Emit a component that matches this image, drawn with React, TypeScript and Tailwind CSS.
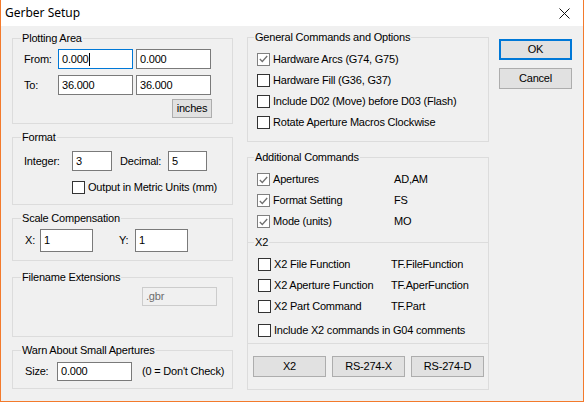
import React from "react";

const font = { fontFamily: '"Liberation Sans", Arial, sans-serif' };

function Group({
  title,
  className,
  children,
}: {
  title: string;
  className?: string;
  children: React.ReactNode;
}) {
  return (
    <fieldset className={`border border-[#dcdcdc] p-0 m-0 min-w-0 ${className ?? ""}`}>
      <legend className="ml-[8px] px-[1px] leading-[14px] text-[11px]">{title}</legend>
      {children}
    </fieldset>
  );
}

function TextBox({
  value,
  w,
  h = "h-[20px]",
  focused,
  disabled,
}: {
  value: string;
  w: string;
  h?: string;
  focused?: boolean;
  disabled?: boolean;
}) {
  return (
    <div
      className={`${w} ${h} flex items-center pl-[3px] border text-[11px] ${
        disabled
          ? "border-[#cccccc] bg-[#f0f0f0] text-[#6d6d6d]"
          : focused
          ? "border-[#0078d7] bg-white"
          : "border-[#7a7a7a] bg-white"
      }`}
    >
      <span>{value}</span>
      {focused && <span className="w-[1px] h-[13px] bg-black" />}
    </div>
  );
}

function Check({ checked, label, className }: { checked?: boolean; label: string; className?: string }) {
  return (
    <div className={`flex items-center gap-[3px] ${className ?? ""}`}>
      <span
        className={`w-[13px] h-[13px] shrink-0 border bg-white flex items-center justify-center ${
          checked ? "border-[#808080]" : "border-[#333333]"
        }`}
      >
        {checked && (
          <svg width="9" height="8" viewBox="0 0 9 8">
            <path d="M0.8 4 L3.3 6.5 L8.2 1" fill="none" stroke="#707070" strokeWidth="1.3" />
          </svg>
        )}
      </span>
      <span className="whitespace-nowrap">{label}</span>
    </div>
  );
}

function Btn({ label, def, className }: { label: string; def?: boolean; className?: string }) {
  return (
    <div
      className={`w-[73px] h-[21px] flex items-center justify-center bg-[#e1e1e1] text-[11px] ${
        def ? "border-2 border-[#0078d7]" : "border border-[#adadad]"
      } ${className ?? ""}`}
    >
      {label}
    </div>
  );
}

export default function App() {
  const general = [
    { label: "Hardware Arcs (G74, G75)", checked: true, h: "h-[22px]" },
    { label: "Hardware Fill (G36, G37)", checked: false, h: "h-[21px]" },
    { label: "Include D02 (Move) before D03 (Flash)", checked: false, h: "h-[21px]" },
    { label: "Rotate Aperture Macros Clockwise", checked: false, h: "h-[21px]" },
  ];
  const additional = [
    { label: "Apertures", code: "AD,AM" },
    { label: "Format Setting", code: "FS" },
    { label: "Mode (units)", code: "MO" },
  ];
  const x2 = [
    { label: "X2 File Function", code: "TF.FileFunction", h: "h-[22px]" },
    { label: "X2 Aperture Function", code: "TF.AperFunction", h: "h-[21px]" },
    { label: "X2 Part Command", code: "TF.Part", h: "h-[21px]" },
  ];

  return (
    <div
      className="w-[584px] h-[402px] bg-[#f0f0f0] border-x border-b border-[#f37a2c] flex flex-col text-black text-[11px] tracking-[-0.2px] overflow-hidden"
      style={font}
    >
      {/* title bar */}
      <div className="h-[26px] bg-white flex items-center justify-between pl-[4px] pr-[13px] shrink-0 tracking-normal">
        <span className="text-[12px]" style={{ fontFamily: '"Noto Sans", "Open Sans", sans-serif' }}>
          Gerber Setup
        </span>
        <svg width="11" height="11" viewBox="0 0 11 11">
          <path d="M0.5 0.5 L10.5 10.5 M10.5 0.5 L0.5 10.5" stroke="#111" strokeWidth="1" />
        </svg>
      </div>

      <div className="flex pl-[11px]">
        {/* left column */}
        <div className="w-[221px] flex flex-col pt-[5px]">
          <Group title="Plotting Area" className="h-[93px]">
            <div className="pl-[11px] pt-[4px] flex flex-col">
              <div className="flex items-center">
                <span className="w-[34px]">From:</span>
                <TextBox value="0.000" w="w-[75px]" focused />
                <div className="ml-[3px]">
                  <TextBox value="0.000" w="w-[75px]" />
                </div>
              </div>
              <div className="flex items-center mt-[6px]">
                <span className="w-[34px]">To:</span>
                <TextBox value="36.000" w="w-[75px]" />
                <div className="ml-[3px]">
                  <TextBox value="36.000" w="w-[75px]" />
                </div>
              </div>
              <div className="mt-[4px] ml-[148px] w-[40px] h-[19px] bg-[#e1e1e1] border border-[#adadad] flex items-center justify-center">
                inches
              </div>
            </div>
          </Group>

          <Group title="Format" className="h-[75px] mt-[6px]">
            <div className="pl-[11px] pt-[7px] flex flex-col">
              <div className="flex items-center">
                <span className="w-[48px]">Integer:</span>
                <TextBox value="3" w="w-[40px]" />
                <span className="w-[48px] ml-[8px]">Decimal:</span>
                <TextBox value="5" w="w-[39px]" />
              </div>
              <Check label="Output in Metric Units (mm)" className="mt-[8px] ml-[48px]" />
            </div>
          </Group>

          <Group title="Scale Compensation" className="h-[50px] mt-[6px]">
            <div className="pl-[11px] pt-[4px] flex items-center">
              <span className="w-[16px] pl-[1px]">X:</span>
              <TextBox value="1" w="w-[53px]" h="h-[23px]" />
              <span className="w-[16px] ml-[26px]">Y:</span>
              <TextBox value="1" w="w-[53px]" h="h-[23px]" />
            </div>
          </Group>

          <Group title="Filename Extensions" className="h-[67px] mt-[9px]">
            <div className="pl-[129px] pt-[3px]">
              <TextBox value=".gbr" w="w-[75px]" h="h-[19px]" disabled />
            </div>
          </Group>

          <Group title="Warn About Small Apertures" className="h-[46px] mt-[6px]">
            <div className="pl-[11px] pt-[5px] flex items-center">
              <span className="w-[33px] pl-[1px]">Size:</span>
              <TextBox value="0.000" w="w-[75px]" h="h-[19px]" />
              <span className="ml-[10px]">(0 = Don't Check)</span>
            </div>
          </Group>
        </div>

        {/* right column */}
        <div className="w-[242px] ml-[14px] flex flex-col pt-[4px]">
          <fieldset className="border border-[#dcdcdc] p-0 m-0 min-w-0 h-[112px]">
            <legend className="ml-[6px] px-[1px] leading-[14px]">General Commands and Options</legend>
            <div className="pl-[9px] pt-[4px] flex flex-col">
              {general.map((g) => (
                <div key={g.label} className={`${g.h} flex items-center`}>
                  <Check label={g.label} checked={g.checked} />
                </div>
              ))}
            </div>
          </fieldset>

          <fieldset className="border border-[#dcdcdc] p-0 m-0 min-w-0 h-[240px] mt-[8px]">
            <legend className="ml-[6px] px-[1px] leading-[14px]">Additional Commands</legend>
            <div className="pl-[9px] pt-[5px] flex flex-col">
              {additional.map((a) => (
                <div key={a.label} className="h-[21px] flex items-center">
                  <div className="w-[137px]">
                    <Check label={a.label} checked />
                  </div>
                  <span>{a.code}</span>
                </div>
              ))}
            </div>

            <fieldset className="border-t border-b border-x-0 border-[#dcdcdc] p-0 m-0 mt-[3px] min-w-0 h-[109px]">
              <legend className="ml-[6px] px-[1px] leading-[14px]">X2</legend>
              <div className="pl-[10px] pt-[4px] flex flex-col">
                {x2.map((x) => (
                  <div key={x.label} className={`${x.h} flex items-center`}>
                    <div className="w-[133px]">
                      <Check label={x.label} />
                    </div>
                    <span>{x.code}</span>
                  </div>
                ))}
                <Check label="Include X2 commands in G04 comments" className="mt-[3px] h-[21px]" />
              </div>
            </fieldset>

            <div className="flex gap-[6px] pl-[5px] mt-[12px]">
              <Btn label="X2" />
              <Btn label="RS-274-X" />
              <Btn label="RS-274-D" />
            </div>
          </fieldset>
        </div>

        {/* buttons */}
        <div className="ml-[10px] flex flex-col gap-[8px] pt-[13px]">
          <Btn label="OK" def />
          <Btn label="Cancel" />
        </div>
      </div>
    </div>
  );
}
